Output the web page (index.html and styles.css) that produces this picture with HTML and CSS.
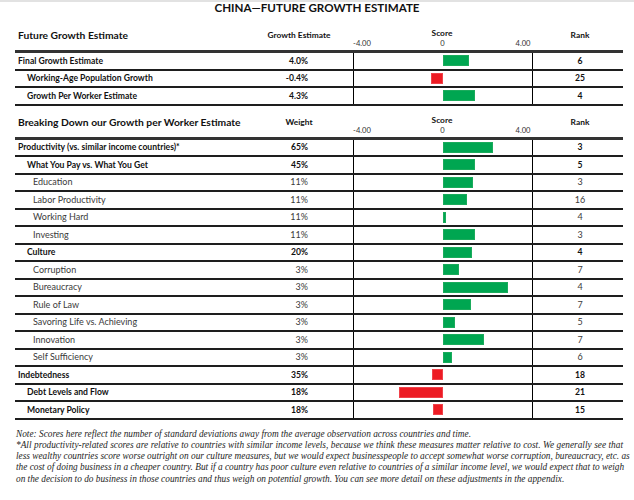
FILE: index.html
```html
<!DOCTYPE html>
<html>
<head>
<meta charset="utf-8">
<link rel="stylesheet" href="styles.css">
</head>
<body>
<div class="page">
  <div class="topbar"></div>
  <h1 class="title">CHINA—FUTURE GROWTH ESTIMATE</h1>

  <section class="table t1">
    <div class="row head">
      <div class="c-label">Future Growth Estimate</div>
      <div class="c-val">Growth Estimate</div>
      <div class="c-score"><div class="score-title">Score</div><div class="axis"><span>-4.00</span><span>0</span><span>4.00</span></div></div>
      <div class="c-rank">Rank</div>
    </div>
    <div class="row l0">
      <div class="c-label">Final Growth Estimate</div><div class="c-val">4.0%</div>
      <div class="c-score"><div class="neg"></div><div class="pos"><i class="bar green" style="width:26px"></i></div></div>
      <div class="c-rank">6</div>
    </div>
    <div class="row l1">
      <div class="c-label">Working-Age Population Growth</div><div class="c-val">-0.4%</div>
      <div class="c-score"><div class="neg"><i class="bar red" style="width:12px"></i></div><div class="pos"></div></div>
      <div class="c-rank">25</div>
    </div>
    <div class="row l1">
      <div class="c-label">Growth Per Worker Estimate</div><div class="c-val">4.3%</div>
      <div class="c-score"><div class="neg"></div><div class="pos"><i class="bar green" style="width:32px"></i></div></div>
      <div class="c-rank">4</div>
    </div>
  </section>

  <section class="table t2">
    <div class="row head">
      <div class="c-label">Breaking Down our Growth per Worker Estimate</div>
      <div class="c-val">Weight</div>
      <div class="c-score"><div class="score-title">Score</div><div class="axis"><span>-4.00</span><span>0</span><span>4.00</span></div></div>
      <div class="c-rank">Rank</div>
    </div>
    <div class="row l0">
      <div class="c-label">Productivity (vs. similar income countries)*</div><div class="c-val">65%</div>
      <div class="c-score"><div class="neg"></div><div class="pos"><i class="bar green" style="width:50px"></i></div></div>
      <div class="c-rank">3</div>
    </div>
    <div class="row l1">
      <div class="c-label">What You Pay vs. What You Get</div><div class="c-val">45%</div>
      <div class="c-score"><div class="neg"></div><div class="pos"><i class="bar green" style="width:32px"></i></div></div>
      <div class="c-rank">5</div>
    </div>
    <div class="row l2">
      <div class="c-label">Education</div><div class="c-val">11%</div>
      <div class="c-score"><div class="neg"></div><div class="pos"><i class="bar green" style="width:30px"></i></div></div>
      <div class="c-rank">3</div>
    </div>
    <div class="row l2">
      <div class="c-label">Labor Productivity</div><div class="c-val">11%</div>
      <div class="c-score"><div class="neg"></div><div class="pos"><i class="bar green" style="width:24px"></i></div></div>
      <div class="c-rank">16</div>
    </div>
    <div class="row l2">
      <div class="c-label">Working Hard</div><div class="c-val">11%</div>
      <div class="c-score"><div class="neg"></div><div class="pos"><i class="bar green" style="width:3px"></i></div></div>
      <div class="c-rank">4</div>
    </div>
    <div class="row l2">
      <div class="c-label">Investing</div><div class="c-val">11%</div>
      <div class="c-score"><div class="neg"></div><div class="pos"><i class="bar green" style="width:32px"></i></div></div>
      <div class="c-rank">3</div>
    </div>
    <div class="row l1">
      <div class="c-label">Culture</div><div class="c-val">20%</div>
      <div class="c-score"><div class="neg"></div><div class="pos"><i class="bar green" style="width:29px"></i></div></div>
      <div class="c-rank">4</div>
    </div>
    <div class="row l2">
      <div class="c-label">Corruption</div><div class="c-val">3%</div>
      <div class="c-score"><div class="neg"></div><div class="pos"><i class="bar green" style="width:16px"></i></div></div>
      <div class="c-rank">7</div>
    </div>
    <div class="row l2">
      <div class="c-label">Bureaucracy</div><div class="c-val">3%</div>
      <div class="c-score"><div class="neg"></div><div class="pos"><i class="bar green" style="width:65px"></i></div></div>
      <div class="c-rank">4</div>
    </div>
    <div class="row l2">
      <div class="c-label">Rule of Law</div><div class="c-val">3%</div>
      <div class="c-score"><div class="neg"></div><div class="pos"><i class="bar green" style="width:28px"></i></div></div>
      <div class="c-rank">7</div>
    </div>
    <div class="row l2">
      <div class="c-label">Savoring Life vs. Achieving</div><div class="c-val">3%</div>
      <div class="c-score"><div class="neg"></div><div class="pos"><i class="bar green" style="width:12px"></i></div></div>
      <div class="c-rank">5</div>
    </div>
    <div class="row l2">
      <div class="c-label">Innovation</div><div class="c-val">3%</div>
      <div class="c-score"><div class="neg"></div><div class="pos"><i class="bar green" style="width:41px"></i></div></div>
      <div class="c-rank">7</div>
    </div>
    <div class="row l2">
      <div class="c-label">Self Sufficiency</div><div class="c-val">3%</div>
      <div class="c-score"><div class="neg"></div><div class="pos"><i class="bar green" style="width:9px"></i></div></div>
      <div class="c-rank">6</div>
    </div>
    <div class="row l0">
      <div class="c-label">Indebtedness</div><div class="c-val">35%</div>
      <div class="c-score"><div class="neg"><i class="bar red" style="width:11px"></i></div><div class="pos"></div></div>
      <div class="c-rank">18</div>
    </div>
    <div class="row l1">
      <div class="c-label">Debt Levels and Flow</div><div class="c-val">18%</div>
      <div class="c-score"><div class="neg"><i class="bar red" style="width:44px"></i></div><div class="pos"></div></div>
      <div class="c-rank">21</div>
    </div>
    <div class="row l1">
      <div class="c-label">Monetary Policy</div><div class="c-val">18%</div>
      <div class="c-score"><div class="neg"><i class="bar red" style="width:10px"></i></div><div class="pos"></div></div>
      <div class="c-rank">15</div>
    </div>
  </section>

  <div class="note">
    <p class="line last">Note: Scores here reflect the number of standard deviations away from the average observation across countries and time.</p>
    <p class="line">*All productivity-related scores are relative to countries with similar income levels, because we think these measures matter relative to cost. We generally see that</p>
    <p class="line">less wealthy countries score worse outright on our culture measures, but we would expect businesspeople to accept somewhat worse corruption, bureaucracy, etc. as</p>
    <p class="line">the cost of doing business in a cheaper country. But if a country has poor culture even relative to countries of a similar income level, we would expect that to weigh</p>
    <p class="line last">on the decision to do business in those countries and thus weigh on potential growth. You can see more detail on these adjustments in the appendix.</p>
  </div>
</div>
</body>
</html>
```

FILE: styles.css
```css
* { box-sizing: border-box; }
html, body { margin: 0; padding: 0; background: #fff; }
body {
  font-family: "Lato", "Open Sans", sans-serif;
  color: #111;
}
.page {
  width: 634px;
  height: 500px;
  overflow: hidden;
}
.topbar {
  height: 2px;
  background: #e2e2e2;
}
.title {
  margin: 0;
  height: 12px;
  line-height: 12px;
  font-size: 11.6px;
  font-weight: 700;
  text-align: center;
  color: #111;
}
.table {
  margin: 0 11px 0 15px;
}
.t1 { margin-top: 12px; }
.t2 { margin-top: 7px; }

.row {
  display: grid;
  grid-template-columns: 238px 100px 180px 90px;
  height: 17.5px;
  border-bottom: 2px solid #1e1e1e;
  align-items: center;
  font-size: 8.6px;
  line-height: 10px;
}
.row.head {
  height: 27px;
  border-bottom: 3px solid #333;
  align-items: start;
}
.head .c-label {
  padding-left: 3px;
  padding-top: 4px;
  font-size: 10.3px;
  line-height: 11px;
  font-weight: 700;
}
.head .c-val {
  padding-top: 4px;
  padding-right: 8px;
  text-align: center;
  font-size: 8.4px;
  line-height: 11px;
  font-weight: 700;
}
.head .c-rank {
  padding-top: 4px;
  text-align: center;
  font-size: 8.4px;
  line-height: 11px;
  font-weight: 700;
}
.head .c-score {
  display: block;
  border: 0;
  padding-top: 2px;
  height: auto;
}
.score-title {
  text-align: center;
  font-size: 8.4px;
  line-height: 10px;
  font-weight: 700;
  padding-right: 2px;
}
.axis {
  display: flex;
  justify-content: space-between;
  margin-left: -3px;
  width: 185px;
  font-size: 7.6px;
  line-height: 10px;
  color: #333;
}
.axis span {
  width: 24px;
  text-align: center;
}

.c-val {
  text-align: right;
  padding-right: 45px;
}
.c-rank {
  text-align: center;
  padding-left: 4px;
}
.c-score {
  display: flex;
  height: 100%;
  border-left: 1px solid #000;
  border-right: 1px solid #000;
  align-items: center;
}
.neg, .pos {
  flex: 1;
  display: flex;
  align-items: center;
}
.neg { justify-content: flex-end; }
.bar {
  display: block;
  height: 11px;
}
.bar.green { background: #00a651; border: 1px solid #1bab5c; }
.bar.red { background: #ed1c24; border: 1px solid #f0424a; }

.l0, .l1 { font-weight: 700; color: #111; }
.l0 .c-label { padding-left: 3px; }
.l1 .c-label { padding-left: 12px; }
.l2 { font-weight: 400; color: #3a3a3a; font-size: 9px; }
.l2 .c-label { padding-left: 18px; }

.note {
  margin: 9px 11px 0 16px;
  font-family: "Liberation Serif", serif;
  font-style: italic;
  font-size: 9.3px;
  line-height: 11.3px;
  color: #1e1e1e;
}
.note .line {
  margin: 0;
  white-space: nowrap;
  text-align: justify;
  text-align-last: justify;
}
.note .line.last {
  text-align-last: left;
}
```
